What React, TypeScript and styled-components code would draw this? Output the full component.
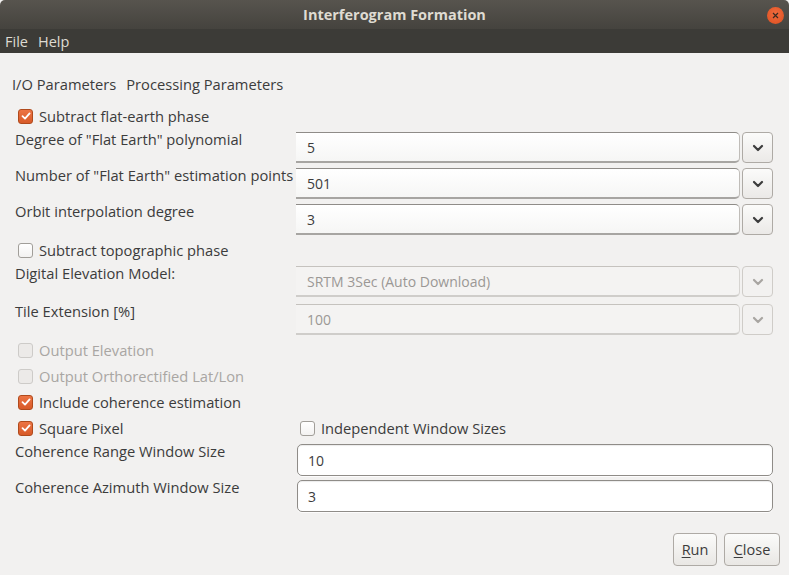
import React from "react";
import styled, { createGlobalStyle } from "styled-components";

const Global = createGlobalStyle`
  html, body { margin: 0; padding: 0; background: #f2f1f0; }
  body { font-family: "Open Sans", "Noto Sans", sans-serif; }
`;

const Window = styled.div`
  width: 789px;
  height: 575px;
  display: flex;
  flex-direction: column;
  background: #f2f1f0;
  overflow: hidden;
  font-size: 14.7px;
  color: #3c3c3c;
`;

const TitleBar = styled.div`
  height: 29px;
  flex: none;
  display: flex;
  align-items: center;
  justify-content: center;
  position: relative;
  background: linear-gradient(#57544e, #45433e);
  border-radius: 5px 5px 0 0;
  color: #dfdbd2;
  font-weight: bold;
  font-size: 14.5px;
`;

const CloseDot = styled.div`
  position: absolute;
  right: 5px;
  top: 7px;
  width: 17px;
  height: 17px;
  border-radius: 50%;
  background: radial-gradient(circle at 50% 40%, #f26b3e, #dc4f1f);
  display: flex;
  align-items: center;
  justify-content: center;
`;

const MenuBar = styled.div`
  height: 24px;
  flex: none;
  display: flex;
  align-items: center;
  gap: 10px;
  padding: 0 5px;
  background: #3c3b37;
  color: #dfdbd2;
  font-size: 14.5px;
`;

const Body = styled.div`
  flex: 1;
  display: flex;
  flex-direction: column;
  padding: 22px 16px 0 15px;
`;

const Tabs = styled.div`
  display: flex;
  gap: 10px;
  margin-left: -3px;
  height: 20px;
  line-height: 18px;
  margin-bottom: 9px;
`;

const CheckRow = styled.label<{ $disabled?: boolean }>`
  display: flex;
  align-items: center;
  gap: 6px;
  height: 26px;
  box-sizing: border-box;
  padding: 0 0 2px 3px;
  white-space: nowrap;
  color: ${(p) => (p.$disabled ? "#a9a6a3" : "#3c3c3c")};
`;

const Box = styled.span<{ $checked?: boolean; $disabled?: boolean }>`
  width: 13px;
  height: 13px;
  flex: none;
  border-radius: 3px;
  display: flex;
  align-items: center;
  justify-content: center;
  border: 1px solid
    ${(p) => (p.$checked ? "#b04a1c" : p.$disabled ? "#cdcbc8" : "#a19e99")};
  background: ${(p) =>
    p.$checked
      ? "linear-gradient(#ec7444, #d85a28)"
      : p.$disabled
      ? "#eceae8"
      : "linear-gradient(#ffffff, #f3f2f1)"};
`;

const FieldRow = styled.div<{ $h: number }>`
  display: grid;
  grid-template-columns: 281px 1fr;
  height: ${(p) => p.$h}px;
`;

const Label = styled.div`
  height: 20px;
  line-height: 18px;
  white-space: nowrap;
  color: #3c3c3c;
`;

const Combo = styled.div`
  display: flex;
  gap: 2px;
  margin-top: 2px;
  height: 31px;
`;

const ComboEntry = styled.div<{ $disabled?: boolean }>`
  flex: 1;
  box-sizing: border-box;
  height: 31px;
  display: flex;
  align-items: center;
  padding-left: 11px;
  font-size: 14px;
  border-top: 1px solid ${(p) => (p.$disabled ? "#c5c2be" : "#8f8c88")};
  border-bottom: 2px solid ${(p) => (p.$disabled ? "#cfcdca" : "#a7a5a2")};
  border-right: 1px solid ${(p) => (p.$disabled ? "#d6d4d1" : "#c0bdb9")};
  border-radius: 0 5px 5px 0;
  background: ${(p) =>
    p.$disabled ? "#f4f3f2" : "linear-gradient(#ffffff, #f6f6f5)"};
  color: ${(p) => (p.$disabled ? "#9b9895" : "#3c3c3c")};
`;

const DropBtn = styled.div<{ $disabled?: boolean }>`
  width: 31px;
  height: 31px;
  box-sizing: border-box;
  border: 1px solid ${(p) => (p.$disabled ? "#cfccc8" : "#aeaaa5")};
  border-radius: 4px;
  background: ${(p) =>
    p.$disabled ? "#f2f1f0" : "linear-gradient(#fbfbfa, #ebe9e7)"};
  display: flex;
  align-items: center;
  justify-content: center;
  color: ${(p) => (p.$disabled ? "#a8a5a1" : "#3c3c3c")};
`;

const DualRow = styled.div`
  display: grid;
  grid-template-columns: 282px 1fr;
  height: 26px;
`;

const Entry = styled.div`
  box-sizing: border-box;
  height: 32px;
  margin-top: 2px;
  margin-left: 1px;
  border: 1px solid #8f8c88;
  border-radius: 5px;
  background: #ffffff;
  box-shadow: inset 0 1px 1px rgba(0, 0, 0, 0.08), 0 1px 0 rgba(255,255,255,0.8);
  display: flex;
  align-items: center;
  padding-left: 10px;
  font-size: 14px;
`;

const Footer = styled.div`
  display: flex;
  justify-content: flex-end;
  gap: 7px;
  margin-top: 19px;
  margin-right: -7px;
`;

const Button = styled.div<{ $w: number }>`
  width: ${(p) => p.$w}px;
  height: 33px;
  box-sizing: border-box;
  border: 1px solid #aeaaa5;
  border-radius: 4px;
  background: linear-gradient(#fbfbfa, #e9e7e4);
  display: flex;
  align-items: center;
  justify-content: center;
  font-size: 14.5px;
  color: #3c3c3c;
  u { text-decoration-thickness: 1px; text-underline-offset: 2px; }
`;

const Check = ({ checked, disabled }: { checked?: boolean; disabled?: boolean }) => (
  <Box $checked={checked} $disabled={disabled}>
    {checked && (
      <svg width="10" height="10" viewBox="0 0 10 10">
        <path d="M1.5 5.2 L4 7.6 L8.6 2.4" fill="none" stroke="#fff" strokeWidth="1.8" strokeLinecap="round" strokeLinejoin="round" />
      </svg>
    )}
  </Box>
);

const Chevron = () => (
  <svg width="12" height="8" viewBox="0 0 12 8">
    <path d="M2 2 L6 6 L10 2" fill="none" stroke="currentColor" strokeWidth="2.2" strokeLinecap="round" strokeLinejoin="round" />
  </svg>
);

const ComboRow = ({ label, value, h, disabled }: { label: string; value: string; h: number; disabled?: boolean }) => (
  <FieldRow $h={h}>
    <Label>{label}</Label>
    <Combo>
      <ComboEntry $disabled={disabled}>{value}</ComboEntry>
      <DropBtn $disabled={disabled}>
        <Chevron />
      </DropBtn>
    </Combo>
  </FieldRow>
);

export default function App() {
  return (
    <Window>
      <Global />
      <TitleBar>
        Interferogram Formation
        <CloseDot>
          <svg width="7" height="7" viewBox="0 0 7 7">
            <path d="M1 1 L6 6 M6 1 L1 6" stroke="#3b2a20" strokeWidth="1.2" />
          </svg>
        </CloseDot>
      </TitleBar>
      <MenuBar>
        <span>File</span>
        <span>Help</span>
      </MenuBar>
      <Body>
        <Tabs>
          <span>I/O Parameters</span>
          <span>Processing Parameters</span>
        </Tabs>
        <CheckRow>
          <Check checked />
          Subtract flat-earth phase
        </CheckRow>
        <ComboRow label={'Degree of "Flat Earth" polynomial'} value="5" h={36} />
        <ComboRow label={'Number of "Flat Earth" estimation points'} value="501" h={36} />
        <ComboRow label="Orbit interpolation degree" value="3" h={36} />
        <CheckRow>
          <Check />
          Subtract topographic phase
        </CheckRow>
        <ComboRow label="Digital Elevation Model:" value="SRTM 3Sec (Auto Download)" h={38} disabled />
        <ComboRow label="Tile Extension [%]" value="100" h={36} disabled />
        <CheckRow $disabled>
          <Check disabled />
          Output Elevation
        </CheckRow>
        <CheckRow $disabled>
          <Check disabled />
          Output Orthorectified Lat/Lon
        </CheckRow>
        <CheckRow>
          <Check checked />
          Include coherence estimation
        </CheckRow>
        <DualRow>
          <CheckRow>
            <Check checked />
            Square Pixel
          </CheckRow>
          <CheckRow>
            <Check />
            Independent Window Sizes
          </CheckRow>
        </DualRow>
        <FieldRow $h={36}>
          <Label>Coherence Range Window Size</Label>
          <Entry>10</Entry>
        </FieldRow>
        <FieldRow $h={36}>
          <Label>Coherence Azimuth Window Size</Label>
          <Entry>3</Entry>
        </FieldRow>
        <Footer>
          <Button $w={44}>
            <span><u>R</u>un</span>
          </Button>
          <Button $w={56}>
            <span><u>C</u>lose</span>
          </Button>
        </Footer>
      </Body>
    </Window>
  );
}
